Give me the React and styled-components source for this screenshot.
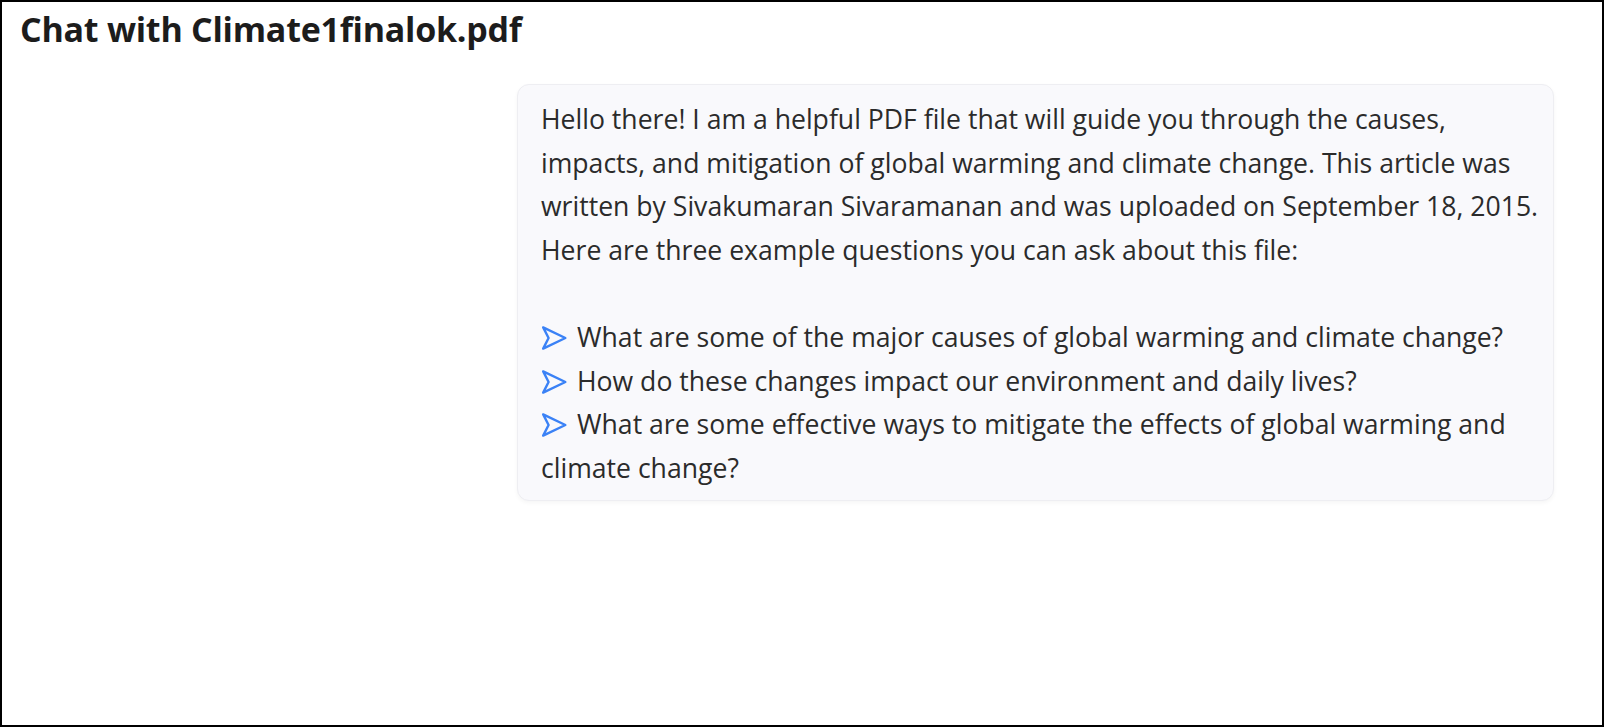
import React from 'react';
import styled, { createGlobalStyle } from 'styled-components';

const GlobalStyle = createGlobalStyle`
    html, body {
        margin: 0;
        padding: 0;
        background: #ffffff;
    }
    * {
        box-sizing: border-box;
    }
`;

const Page = styled.div`
    width: 1604px;
    height: 727px;
    border: 2px solid #000000;
    background: #ffffff;
    display: flex;
    flex-direction: column;
    font-family: 'Open Sans', 'Noto Sans', sans-serif;
    overflow: hidden;
`;

const Title = styled.h1`
    margin: 0;
    padding: 5px 18px 0;
    font-size: 34px;
    line-height: 44px;
    font-weight: 700;
    color: #1c1c1c;
    letter-spacing: -0.25px;
`;

const Thread = styled.div`
    display: flex;
    flex-direction: column;
    align-items: flex-end;
    padding: 33px 48px 0 0;
`;

const Bubble = styled.div`
    width: 1037px;
    padding: 13px 10px 10px 23px;
    background: #f9f9fc;
    border: 1px solid #eeeef2;
    border-radius: 12px;
    box-shadow: 0 2px 4px rgba(0, 0, 0, 0.04);
    font-size: 26.6px;
    line-height: 43.6px;
    color: #2b2b2b;
`;

const Paragraph = styled.p`
    margin: 0;
`;

const Spacer = styled.div`
    height: 43.6px;
`;

const Question = styled.div`
    margin: 0;
`;

const Arrow = styled.svg`
    display: inline-block;
    width: 26px;
    height: 26px;
    margin-right: 10px;
    vertical-align: -4px;
`;

function SendIcon() {
    return (
        <Arrow viewBox="0 0 24 24" fill="none">
            <path
                d="M2 2.2 L22.5 12 L2 21.8 L7 12 Z"
                stroke="#3b82f6"
                strokeWidth="2.2"
                strokeLinejoin="round"
            />
        </Arrow>
    );
}

const questions = [
    'What are some of the major causes of global warming and climate change?',
    'How do these changes impact our environment and daily lives?',
    'What are some effective ways to mitigate the effects of global warming and climate change?',
];

export default function App() {
    return (
        <>
            <GlobalStyle />
            <Page>
                <Title>Chat with Climate1finalok.pdf</Title>
                <Thread>
                    <Bubble>
                        <Paragraph>
                            Hello there! I am a helpful PDF file that will guide you through the causes,
                            impacts, and mitigation of global warming and climate change. This article was
                            written by Sivakumaran Sivaramanan and was uploaded on September 18, 2015.
                            Here are three example questions you can ask about this file:
                        </Paragraph>
                        <Spacer />
                        {questions.map((q) => (
                            <Question key={q}>
                                <SendIcon />
                                {q}
                            </Question>
                        ))}
                    </Bubble>
                </Thread>
            </Page>
        </>
    );
}
